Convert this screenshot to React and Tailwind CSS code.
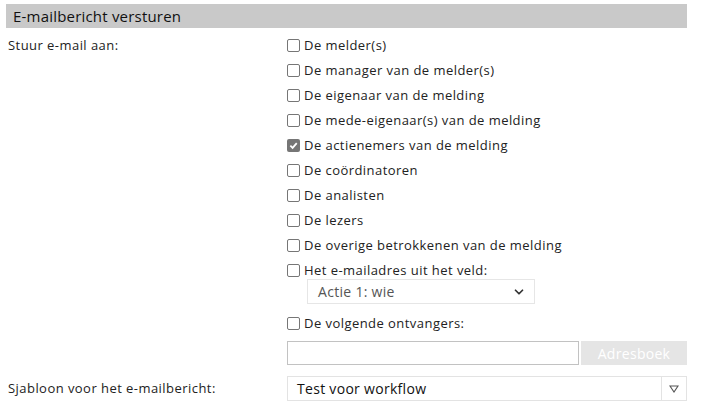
import { ChevronDown } from 'lucide-react'

const options = [
  { label: 'De melder(s)' },
  { label: 'De manager van de melder(s)' },
  { label: 'De eigenaar van de melding' },
  { label: 'De mede-eigenaar(s) van de melding' },
  { label: 'De actienemers van de melding', checked: true },
  { label: 'De coördinatoren' },
  { label: 'De analisten' },
  { label: 'De lezers' },
  { label: 'De overige betrokkenen van de melding' },
]

function Box({ checked }) {
  if (checked) {
    return (
      <span className="w-[13px] h-[13px] rounded-[2px] bg-[#767676] flex items-center justify-center shrink-0">
        <svg width="9" height="9" viewBox="0 0 10 10">
          <path d="M1.5 5.2 L4 7.6 L8.6 2.4" stroke="white" strokeWidth="2" fill="none" />
        </svg>
      </span>
    )
  }
  return <span className="w-[13px] h-[13px] rounded-[2px] border border-[#767676] bg-white shrink-0" />
}

function CheckRow({ label, checked }) {
  return (
    <div className="h-[25px] flex items-center gap-[4px]">
      <Box checked={checked} />
      <span className="text-[#222]">{label}</span>
    </div>
  )
}

export default function App() {
  return (
    <div className="w-[708px] h-[407px] bg-white text-[13px] tracking-[0.45px] text-[#222] pt-[4px]" style={{ fontFamily: '"Open Sans", sans-serif' }}>
      <div className="mx-[6px] w-[681px] h-[24px] bg-[#c9c9c9] flex items-center pl-[7px] text-[15px] tracking-[0.2px] text-[#111]">
        E-mailbericht versturen
      </div>

      <div className="grid grid-cols-[279px_400px] pl-[8px] mt-[5px]">
        <div className="h-[25px] flex items-center">Stuur e-mail aan:</div>
        <div>
          {options.map((o) => (
            <CheckRow key={o.label} label={o.label} checked={o.checked} />
          ))}
          <CheckRow label="Het e-mailadres uit het veld:" />
          <div className="-mt-[4px] ml-[20px] w-[228px] h-[25px] border border-[#e6e6e6] flex items-center justify-between pl-[10px] pr-[8px] text-[#555] text-[14px] tracking-[0.3px]">
            <span>Actie 1: wie</span>
            <ChevronDown size={14} strokeWidth={3} className="text-[#333]" />
          </div>
          <div className="mt-[7px]">
            <CheckRow label="De volgende ontvangers:" />
          </div>
          <div className="flex gap-[2px] mt-[5px]">
            <div className="w-[292px] h-[24px] border border-[#c2c2c2] bg-white" />
            <div className="w-[106px] h-[24px] bg-[#e5e5e5] text-white text-[14px] tracking-[0.3px] flex items-center justify-center">
              Adresboek
            </div>
          </div>
        </div>

        <div className="h-[25px] flex items-center mt-[11px]">Sjabloon voor het e-mailbericht:</div>
        <div className="mt-[11px] w-[400px] h-[25px] border border-[#e3e3e3] flex items-center">
          <span className="flex-1 pl-[9px] text-[14px] tracking-[0.3px] text-[#111]">Test voor workflow</span>
          <span className="w-[25px] h-full border-l border-[#e3e3e3] flex items-center justify-center">
            <svg width="10" height="8" viewBox="0 0 10 8">
              <path d="M1 1 H9 L5 7 Z" fill="none" stroke="#555" strokeWidth="1.1" />
            </svg>
          </span>
        </div>
      </div>
    </div>
  )
}
